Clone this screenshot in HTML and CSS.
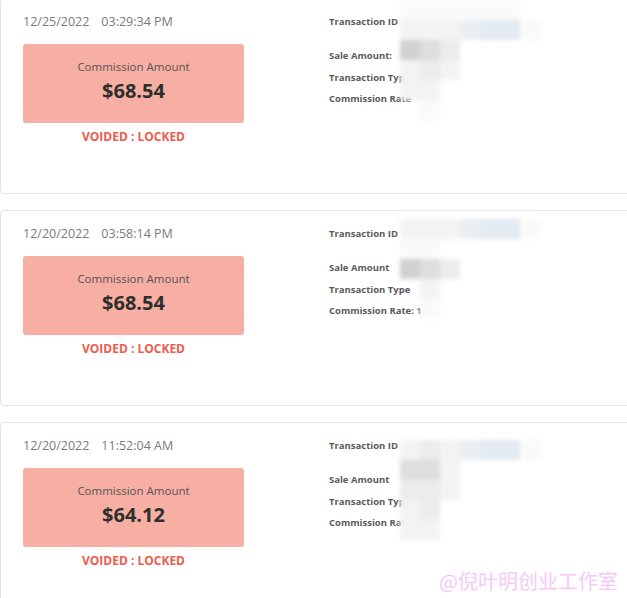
FILE: index.html
```html
<!DOCTYPE html>
<html lang="en">
<head>
  <meta charset="UTF-8" />
  <meta name="viewport" content="width=device-width, initial-scale=1.0"/>
  <title>Commission History</title>
  <link rel="stylesheet" href="styles.css">
</head>
<body>

  <div class="history">

    <!-- card 1 -->
    <div class="card">
      <div class="card-left">
        <div class="date">12/25/2022<span class="time">03:29:34 PM</span></div>
        <div class="amount-box">
          <div class="amount-label">Commission Amount</div>
          <div class="amount">$68.54</div>
        </div>
        <div class="status">VOIDED : LOCKED</div>
      </div>
      <div class="card-right">
        <div class="row row-id">Transaction ID</div>
        <div class="row">Sale Amount:</div>
        <div class="row">Transaction Type</div>
        <div class="row">Commission Rate</div>
      </div>
      <div class="mosaic mosaic-1">
        <i class="s1"></i><i class="s1"></i><i class="s1"></i><i class="s1"></i><i class="s1"></i><i class="s1"></i><i></i>
        <i class="s2"></i><i class="s2"></i><i class="s2"></i><i class="b1"></i><i class="b2"></i><i class="b2"></i><i class="s1"></i>
        <i class="s5"></i><i class="s4"></i><i class="s3"></i><i></i><i></i><i></i><i></i>
        <i class="s2"></i><i class="s3"></i><i class="s2"></i><i></i><i></i><i></i><i></i>
        <i class="s2"></i><i class="s2"></i><i></i><i></i><i></i><i></i><i></i>
        <i></i><i class="s1"></i><i></i><i></i><i></i><i></i><i></i>
      </div>
    </div>

    <!-- card 2 -->
    <div class="card">
      <div class="card-left">
        <div class="date">12/20/2022<span class="time">03:58:14 PM</span></div>
        <div class="amount-box">
          <div class="amount-label">Commission Amount</div>
          <div class="amount">$68.54</div>
        </div>
        <div class="status">VOIDED : LOCKED</div>
      </div>
      <div class="card-right">
        <div class="row row-id">Transaction ID</div>
        <div class="row">Sale Amount</div>
        <div class="row">Transaction Type</div>
        <div class="row">Commission Rate: 1</div>
      </div>
      <div class="mosaic mosaic-2">
        <i class="s2"></i><i class="s2"></i><i class="s2"></i><i class="b1"></i><i class="b2"></i><i class="b2"></i><i class="s1"></i>
        <i class="s1"></i><i class="s1"></i><i></i><i></i><i></i><i></i><i></i>
        <i class="s5"></i><i class="s4"></i><i class="s3"></i><i></i><i></i><i></i><i></i>
        <i></i><i class="s2"></i><i></i><i></i><i></i><i></i><i></i>
        <i></i><i class="s1"></i><i></i><i></i><i></i><i></i><i></i>
      </div>
    </div>

    <!-- card 3 -->
    <div class="card">
      <div class="card-left">
        <div class="date">12/20/2022<span class="time">11:52:04 AM</span></div>
        <div class="amount-box">
          <div class="amount-label">Commission Amount</div>
          <div class="amount">$64.12</div>
        </div>
        <div class="status">VOIDED : LOCKED</div>
      </div>
      <div class="card-right">
        <div class="row row-id">Transaction ID</div>
        <div class="row">Sale Amount</div>
        <div class="row">Transaction Type</div>
        <div class="row">Commission Rate</div>
      </div>
      <div class="mosaic mosaic-3">
        <i class="s2"></i><i class="s3"></i><i class="s2"></i><i class="b1"></i><i class="b2"></i><i class="b2"></i><i class="s1"></i>
        <i class="s4"></i><i class="s4"></i><i class="s2"></i><i></i><i></i><i></i><i></i>
        <i class="s3"></i><i class="s3"></i><i class="s2"></i><i></i><i></i><i></i><i></i>
        <i class="s2"></i><i class="s3"></i><i></i><i></i><i></i><i></i><i></i>
        <i class="s2"></i><i class="s2"></i><i></i><i></i><i></i><i></i><i></i>
      </div>
    </div>

  </div>

  <div class="watermark">@倪叶明创业工作室</div>

</body>
</html>
```

FILE: styles.css
```css
body {
  font-family: 'Open Sans', sans-serif;
  margin: 0;
  padding: 0;
  background-color: #fff;
  overflow: hidden;
  height: 598px;
  position: relative;
}

.history {
  margin-top: -2px;
  width: 660px;
}

.card {
  position: relative;
  display: flex;
  height: 194px;
  border: 1px solid #e4e4e4;
  border-radius: 4px;
  margin-bottom: 16px;
  overflow: hidden;
}

.card-left {
  width: 221px;
  padding: 15px 0 0 22px;
  display: flex;
  flex-direction: column;
  align-items: center;
}

.date {
  align-self: flex-start;
  font-size: 12.5px;
  line-height: 16px;
  color: #7a7a7a;
}

.time {
  margin-left: 12px;
}

.amount-box {
  width: 221px;
  height: 79px;
  margin-top: 14px;
  background-color: #f7aea3;
  border-radius: 3px;
  text-align: center;
  box-sizing: border-box;
  padding-top: 15px;
}

.amount-label {
  font-size: 11.5px;
  line-height: 16px;
  color: #555;
}

.amount {
  margin-top: 4px;
  font-size: 20px;
  font-weight: 700;
  line-height: 24px;
  color: #2e2e2e;
}

.status {
  margin-top: 6px;
  font-size: 12px;
  font-weight: 700;
  line-height: 16px;
  color: #f05a4c;
}

.card-right {
  margin-left: 85px;
  padding-top: 16px;
}

.row {
  font-size: 9.5px;
  font-weight: 700;
  line-height: 14px;
  color: #5a5a5a;
  margin-bottom: 7.5px;
}

.row-id {
  margin-bottom: 20px;
}

/* blurred-out values */
.mosaic {
  position: absolute;
  left: 399px;
  display: grid;
  grid-template-columns: repeat(7, 20px);
  grid-auto-rows: 20px;
  filter: blur(2px);
}

.mosaic-1 { top: 1px; }
.mosaic-2 { top: 8px; }
.mosaic-3 { top: 17px; }

.mosaic i { display: block; }
.mosaic .s1 { background-color: #fafafa; }
.mosaic .s2 { background-color: #f3f3f3; }
.mosaic .s3 { background-color: #ececec; }
.mosaic .s4 { background-color: #dedede; }
.mosaic .s5 { background-color: #d1d1d1; }
.mosaic .b1 { background-color: #eaeff4; }
.mosaic .b2 { background-color: #e3eaf1; }

.watermark {
  position: absolute;
  right: 9px;
  bottom: 4px;
  font-family: 'Noto Sans CJK SC', sans-serif;
  font-size: 20px;
  line-height: 26px;
  color: #f6c8f8;
}
```
